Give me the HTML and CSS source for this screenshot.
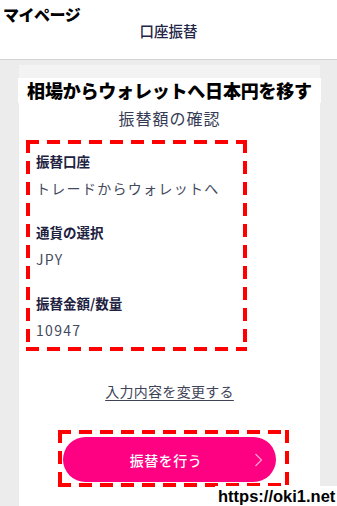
FILE: index.html
```html
<!DOCTYPE html>
<html lang="ja">
<head>
<meta charset="utf-8">
<title>口座振替</title>
<link rel="stylesheet" href="styles.css">
</head>
<body>
<header class="header">
  <div class="mypage">マイページ</div>
  <div class="header-title">口座振替</div>
</header>
<main class="main">
  <section class="card">
    <div class="card-strip"></div>
    <div class="banner">相場からウォレットへ日本円を移す</div>
    <h1 class="heading">振替額の確認</h1>
    <div class="box box-info">
      <div class="group">
        <div class="label">振替口座</div>
        <div class="value">トレードからウォレットへ</div>
      </div>
      <div class="group">
        <div class="label">通貨の選択</div>
        <div class="value">JPY</div>
      </div>
      <div class="group">
        <div class="label">振替金額/数量</div>
        <div class="value">10947</div>
      </div>
    </div>
    <div class="link-row"><a class="change-link" href="#">入力内容を変更する</a></div>
    <div class="box box-button">
      <button class="submit" type="button">
        <span class="submit-text">振替を行う</span>
        <svg class="chevron" width="9" height="14" viewBox="0 0 9 14"><polyline points="1.5,1 7.5,7 1.5,13" fill="none" stroke="#ffa6cf" stroke-width="1.2"/></svg>
      </button>
    </div>
  </section>
</main>
<div class="watermark">https://oki1.net</div>
</body>
</html>
```
FILE: styles.css
```css
* { box-sizing: border-box; }
html, body { margin: 0; padding: 0; }
body {
  background: #ececec;
  font-family: "Noto Sans CJK JP", "Noto Sans", sans-serif;
  width: 337px;
  height: 506px;
  overflow: hidden;
  position: relative;
}
.header {
  height: 60px;
  background: #fff;
  border-bottom: 1px solid #d4d4d4;
}
.mypage {
  font-weight: 900;
  font-size: 16px;
  line-height: 20px;
  color: #000;
  padding: 4px 0 0 3px;
  letter-spacing: -0.5px;
}
.header-title {
  text-align: center;
  font-size: 14.5px;
  line-height: 20px;
  color: #1f2547;
  font-weight: 500;
  margin-top: -3px;
}
.main {
  padding: 5px 17px 0 19px;
}
.card {
  background: #fff;
  height: 441px;
}
.card-strip {
  height: 13px;
  background: #f3f3f3;
}
.banner {
  height: 25px;
  line-height: 25px;
  text-align: center;
  font-weight: 900;
  font-size: 18px;
  color: #000;
  letter-spacing: -0.2px;
  margin: 0 -1px;
  background: #fff;
}
.heading {
  margin: 3px 0 0;
  text-align: center;
  font-size: 16px;
  line-height: 24px;
  font-weight: 400;
  color: #363b55;
  letter-spacing: 1px;
}
.box {
  --dash: #ff0000;
  background:
    repeating-linear-gradient(90deg, var(--dash) 0 13px, transparent 13px 21px) left top / 100% 4px no-repeat,
    repeating-linear-gradient(90deg, var(--dash) 0 13px, transparent 13px 21px) left bottom / 100% 4px no-repeat,
    repeating-linear-gradient(180deg, var(--dash) 0 13px, transparent 13px 21px) left top / 4px 100% no-repeat,
    repeating-linear-gradient(180deg, var(--dash) 0 13px, transparent 13px 21px) right top / 4px 100% no-repeat;
}
.box-info {
  margin: 10px 0 0 7px;
  width: 221px;
  padding: 11px 10px 11px 10px;
}
.group + .group { margin-top: 24px; }
.label {
  font-size: 13.5px;
  line-height: 20px;
  font-weight: 700;
  color: #1c2140;
}
.value {
  margin-top: 7px;
  font-size: 14px;
  line-height: 20px;
  color: #444a5e;
  letter-spacing: 1.3px;
}
.link-row {
  margin-top: 29px;
  text-align: center;
  line-height: 20px;
}
.change-link {
  font-size: 14px;
  color: #3e4358;
  text-decoration: underline;
  text-underline-offset: 3px;
  letter-spacing: 0.3px;
}
.box-button {
  margin: 29px 0 0 39px;
  width: 231px;
  height: 57px;
  padding: 7px 13px 5px 5px;
}
.submit {
  width: 213px;
  height: 45px;
  border: none;
  border-radius: 23px;
  background: #fe0082;
  color: #fff;
  font-family: inherit;
  font-size: 14px;
  font-weight: 500;
  letter-spacing: 0.5px;
  position: relative;
  display: flex;
  align-items: center;
  justify-content: center;
  padding: 0 7px 0 0;
}
.chevron {
  position: absolute;
  right: 13px;
  top: 16px;
}
.watermark {
  position: absolute;
  right: 0;
  bottom: 0;
  width: 122px;
  height: 20px;
  background: #fff;
  font-family: "Liberation Sans", sans-serif;
  font-weight: 700;
  font-size: 16.5px;
  line-height: 20px;
  color: #000;
  padding-left: 3px;
}
```
